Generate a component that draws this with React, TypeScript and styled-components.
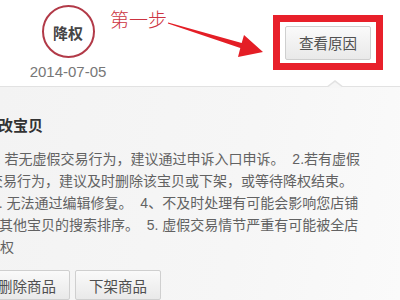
import React from "react";
import styled, { createGlobalStyle } from "styled-components";

const Global = createGlobalStyle`
  html, body {
    margin: 0;
    padding: 0;
    width: 400px;
    height: 300px;
    overflow: hidden;
    background: #ffffff;
    font-family: "Liberation Sans", "Noto Sans CJK SC", sans-serif;
  }
`;

const Page = styled.div`
  width: 400px;
  height: 300px;
  overflow: hidden;
  display: flex;
  flex-direction: column;
`;

const Header = styled.div`
  height: 92px;
  display: flex;
  align-items: flex-start;
  padding-left: 30px;
  background: #ffffff;
`;

const BadgeCol = styled.div`
  width: 76px;
  display: flex;
  flex-direction: column;
  align-items: center;
`;

const Seal = styled.div`
  margin-top: 5px;
  width: 53px;
  height: 53px;
  box-sizing: border-box;
  border: 2px solid #b23a48;
  border-radius: 50%;
  display: flex;
  align-items: center;
  justify-content: center;
  font-size: 15px;
  font-weight: bold;
  color: #444;
  padding-top: 2px;
`;

const DateText = styled.div`
  margin-top: 5px;
  font-size: 15px;
  line-height: 18px;
  color: #777;
  white-space: nowrap;
`;

const StepLabel = styled.div`
  margin-left: 4px;
  margin-top: 10px;
  font-size: 19px;
  line-height: 22px;
  color: #cc3340;
  font-weight: 300;
  white-space: nowrap;
`;

const ArrowSvg = styled.svg`
  margin-left: -1px;
  flex: none;
`;

const Highlight = styled.div`
  margin-left: 7px;
  margin-top: 15px;
  width: 110px;
  height: 55px;
  box-sizing: border-box;
  border: 7px solid #e8202a;
  background: #ffffff;
  display: flex;
  align-items: center;
  justify-content: center;
  flex: none;
`;

const Button = styled.div<{ $h?: number }>`
  height: ${(p) => p.$h ?? 30}px;
  box-sizing: border-box;
  padding: 0 13px;
  border: 1px solid #cfcfcf;
  border-radius: 2px;
  background: linear-gradient(#fafafa, #e9e9e9);
  display: flex;
  align-items: center;
  justify-content: center;
  font-size: 14.5px;
  color: #505050;
  white-space: nowrap;
  flex: none;
`;

const Panel = styled.div`
  position: relative;
  flex: 1;
  border-top: 1px solid #e2e2e2;
  background: linear-gradient(100deg, #f3f3f3 0%, #f6f6f6 60%, #fafafa 100%);
  &::before {
    content: "";
    position: absolute;
    left: 326px;
    top: -7px;
    border-left: 9px solid transparent;
    border-right: 9px solid transparent;
    border-bottom: 7px solid #e2e2e2;
  }
  &::after {
    content: "";
    position: absolute;
    left: 327px;
    top: -5px;
    border-left: 8px solid transparent;
    border-right: 8px solid transparent;
    border-bottom: 6px solid #f6f6f6;
  }
`;

const Content = styled.div`
  margin-left: -11px;
  padding-top: 29px;
`;

const Title = styled.div`
  margin-left: -6px;
  font-size: 15px;
  line-height: 20px;
  font-weight: bold;
  color: #333;
  white-space: nowrap;
`;

const Body = styled.div`
  margin-top: 12px;
  font-size: 14px;
  line-height: 22px;
  color: #626262;
`;

const Line = styled.div<{ $indent: number }>`
  margin-left: ${(p) => p.$indent}px;
  white-space: pre;
`;

const Actions = styled.div`
  margin-top: 12px;
  margin-left: -5px;
  display: flex;
  gap: 5px;
`;

export default function App() {
  return (
    <>
      <Global />
      <Page>
        <Header>
          <BadgeCol>
            <Seal>降权</Seal>
            <DateText>2014-07-05</DateText>
          </BadgeCol>
          <StepLabel>第一步</StepLabel>
          <ArrowSvg width="100" height="65" viewBox="0 0 100 65">
            <polygon
              points="2.15,22.6 75.7,43.1 78,35 97,52 72,57 74.3,47.9 1.85,23.4"
              fill="#e41e26"
            />
          </ArrowSvg>
          <Highlight>
            <Button $h={34}>查看原因</Button>
          </Highlight>
        </Header>
        <Panel>
          <Content>
            <Title>修改宝贝</Title>
            <Body>
              <Line $indent={0}>1. 若无虚假交易行为，建议通过申诉入口申诉。  2.若有虚假</Line>
              <Line $indent={0}>交易行为，建议及时删除该宝贝或下架，或等待降权结束。</Line>
              <Line $indent={2}>3. 无法通过编辑修复。  4、不及时处理有可能会影响您店铺</Line>
              <Line $indent={10}>其他宝贝的搜索排序。  5. 虚假交易情节严重有可能被全店</Line>
              <Line $indent={-3}>降权</Line>
            </Body>
            <Actions>
              <Button>删除商品</Button>
              <Button>下架商品</Button>
            </Actions>
          </Content>
        </Panel>
      </Page>
    </>
  );
}
